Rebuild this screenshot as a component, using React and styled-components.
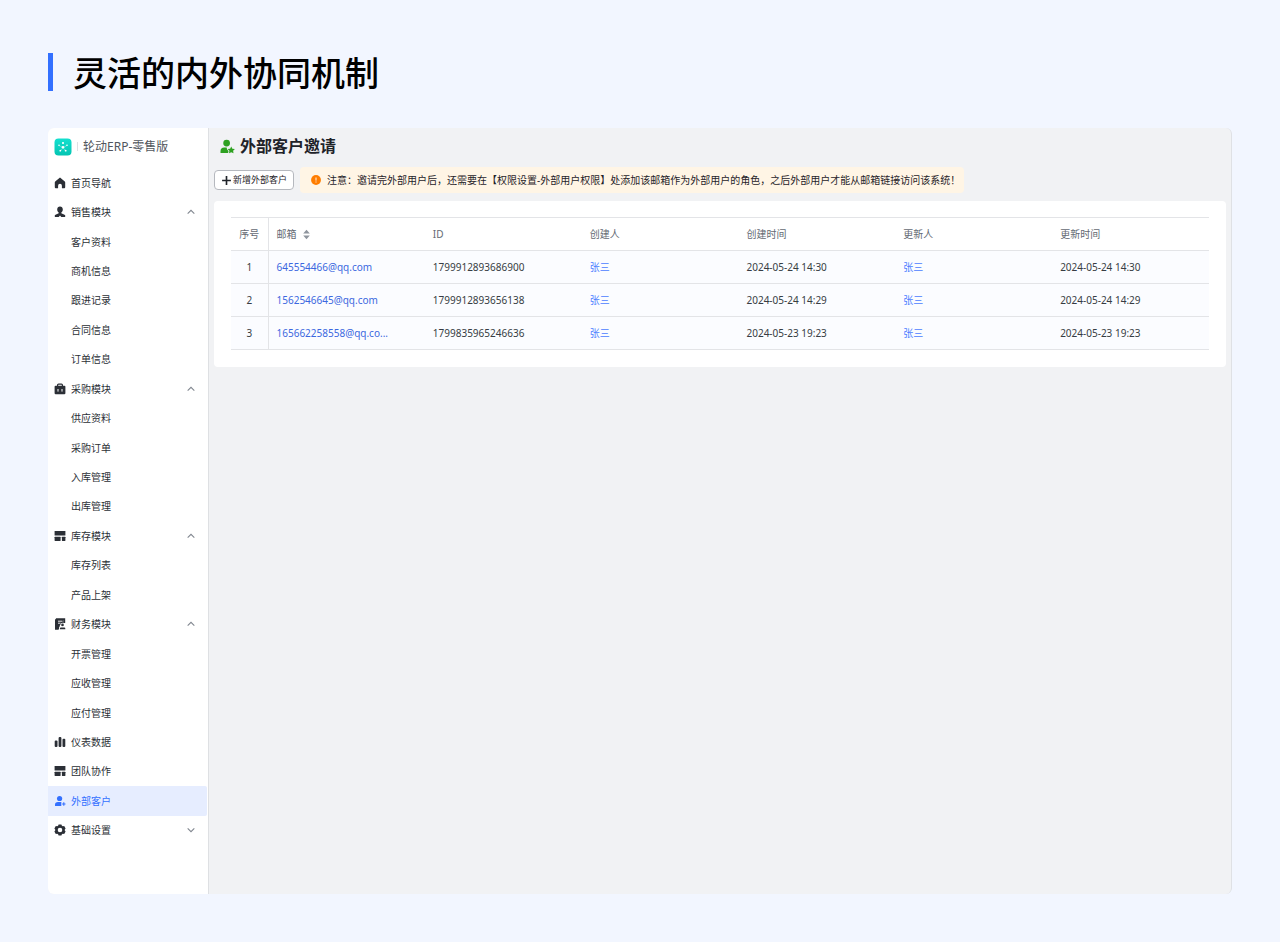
import React from "react";
import styled, { createGlobalStyle } from "styled-components";

const Global = createGlobalStyle`
  *, *::before, *::after { box-sizing: border-box; }
  body {
    margin: 0;
    background: #f2f6ff;
    color: #1f2329;
    font: 10px/16px "Noto Sans", "Noto Sans CJK SC", sans-serif;
  }
`;

const Page = styled.div`
  min-height: 100vh;
  display: flex;
  flex-direction: column;
  gap: 32px;
  padding: 48px;
`;

const Heading = styled.h1`
  display: flex;
  align-items: center;
  gap: 20px;
  margin: 0;
  color: #000;
  font: 500 34px/48px "Noto Sans CJK SC", sans-serif;

  &::before {
    content: "";
    width: 5px;
    height: 38px;
    background: #3370ff;
  }
`;

const Window = styled.div`
  flex: 1;
  display: flex;
  overflow: hidden;
  border-radius: 6px;
  border-right: 1px solid #dfe1e5;
  background: #f1f2f4;
`;

const Sidebar = styled.aside`
  flex: none;
  width: 161px;
  display: flex;
  flex-direction: column;
  background: #fff;
  border-right: 1px solid #dee0e3;
`;

const Brand = styled.div`
  display: flex;
  align-items: center;
  height: 40px;
  padding: 0 6px 3px;
  color: #51565d;
  font-size: 12px;
`;

const Divider = styled.span`
  width: 1px;
  height: 9px;
  margin: 0 5px;
  background: #dee0e3;
`;

const Nav = styled.nav`
  flex: 1;
  display: grid;
  grid-auto-rows: minmax(24px, 1fr);
  padding: 0 1px 49px 0;
`;

const NavItem = styled.a`
  display: flex;
  align-items: center;
  gap: 5px;
  padding: 0 11px 0 ${(p) => (p.$child ? 23 : 6)}px;
  border-radius: 0 2px 2px 0;
  background: ${(p) => (p.$active ? "#e6edff" : "transparent")};
  color: ${(p) => (p.$active ? "#3370ff" : "#2b2f36")};
  text-decoration: none;
`;

const NavLabel = styled.span`
  flex: 1;
`;

const Icon = styled.svg`
  flex: none;
  display: block;
  width: ${(p) => p.$size || 12}px;
  height: ${(p) => p.$size || 12}px;
  color: ${(p) => p.$color || "currentColor"};
`;

const Main = styled.main`
  flex: 1;
  min-width: 0;
  padding: 4px 5px;
`;

const TitleRow = styled.div`
  display: flex;
  align-items: center;
  gap: 5px;
  height: 28px;
  padding-left: 6px;
`;

const Title = styled.h2`
  margin: 0;
  font-size: 16px;
  line-height: 24px;
  font-weight: 700;
`;

const Toolbar = styled.div`
  display: flex;
  align-items: center;
  gap: 6px;
  padding: 7px 0 8px;
`;

const AddButton = styled.button`
  display: flex;
  align-items: center;
  justify-content: center;
  gap: 1px;
  width: 80px;
  height: 20px;
  padding: 0;
  border: 1px solid #b5b8be;
  border-radius: 4px;
  background: #fff;
  color: #1f2329;
  font: inherit;
  font-size: 9px;
  white-space: nowrap;
`;

const Notice = styled.p`
  display: flex;
  align-items: center;
  gap: 6px;
  margin: 0;
  padding: 5px 4px 5px 11px;
  border-radius: 4px;
  background: #fff5e5;
`;

const Card = styled.section`
  padding: 16px 17px 17px;
  border-radius: 4px;
  background: #fff;
`;

const Table = styled.table`
  width: 100%;
  table-layout: fixed;
  border-collapse: collapse;
  border-top: 1px solid #e3e4e7;
`;

const cell = `
  height: 33px;
  padding: 0 8px;
  border-bottom: 1px solid #e3e4e7;
  text-align: left;
  font-weight: 400;
  white-space: nowrap;

  &:first-child {
    width: 37px;
    padding: 0;
    border-right: 1px solid #e3e4e7;
    text-align: center;
  }
`;

const HeadCell = styled.th`
  ${cell}
  color: #646a73;
`;

const Cell = styled.td`
  ${cell}
  color: #373c43;
  background: #fbfcff;
`;

const SortButton = styled.button`
  display: flex;
  align-items: center;
  gap: 4px;
  padding: 0;
  border: 0;
  background: none;
  color: inherit;
  font: inherit;
`;

const TextLink = styled.a`
  color: ${(p) => (p.$person ? "#4c7dff" : "#3c68e0")};
  text-decoration: none;
`;

const shapes = {
  home: <path d="M6 .6 1.200 4.500Q.8 4.900.8 5.400v4.900q0 .9.9.9h2.400V8.700a1.900 1.900 0 0 1 3.800 0v2.500h2.400q.9 0 .9-.9V5.400q0-.5-.4-.9Z" />,
  person: (
    <path d="M6 .6c1.700 0 2.800 1.200 2.800 2.800 0 1.300-.6 2.500-1.500 3.100v.8l3.200 1.500q.8.400.8 1.100 0 1.200-1 1.200H7.300L6 9.600l-1.300 1.500h-3q-1 0-1-1.200 0-.7.8-1.100l3.200-1.500v-.8C3.800 5.900 3.200 4.700 3.200 3.400 3.200 1.800 4.300.6 6 .6Z" />
  ),
  bag: (
    <>
      <path d="M3.600 3V2q0-.9.9-.9h3q.9 0 .9.900V3" fill="none" stroke="currentColor" strokeWidth="1.200" />
      <rect x=".6" y="2.700" width="10.800" height="8.500" rx="1" />
      <path d="M4 6v2.600M8 6v2.600" stroke="#fff" strokeWidth="1" />
    </>
  ),
  layout: (
    <>
      <rect x=".6" y="1" width="10.800" height="4.600" rx=".4" />
      <rect x=".6" y="6.800" width="6" height="4.200" rx=".4" />
      <rect x="7.900" y="6.800" width="3.500" height="4.200" rx=".4" />
    </>
  ),
  finance: (
    <>
      <path
        d="M1.900 1.200h8.400V5M1.900 1.200v9.600h2.800"
        fill="none"
        stroke="currentColor"
        strokeWidth="1.800"
      />
      <path d="M2 1h7.500v5L6 7l-1 4H2Z" />
      <path d="M4 3.200h4.500M4 5.200h2.500" stroke="#fff" strokeWidth=".9" />
      <circle cx="8.500" cy="6.900" r="2.100" fill="#fff" />
      <circle cx="8.500" cy="6.900" r="1.300" />
      <path d="M5.200 11.700V9.900q0-1.200 1-1.200h4.600q1 0 1 1.200v1.800Z" fill="#fff" />
      <path d="M5.900 11.200v-.7q0-1 1-1h3.400q1 0 1 1v.7Z" />
    </>
  ),
  bars: (
    <>
      <rect x=".7" y="4.500" width="2.800" height="6.500" rx="1" />
      <rect x="4.600" y="1" width="2.800" height="10" rx="1" />
      <rect x="8.500" y="2.700" width="2.800" height="8.300" rx="1" />
    </>
  ),
  member: (
    <>
      <circle cx="5.600" cy="3.500" r="2.600" />
      <path d="M1 10.900V9.800Q1 7 4 7h3.300v3.900Z" />
      <path d="M9.800 7.300v3.400M8.100 9h3.400" stroke="currentColor" strokeWidth="1.100" />
    </>
  ),
  gear: (
    <path
      fillRule="evenodd"
      d="M4.600.5h2.800l.5 1.300.9.500 1.400-.2 1.400 2.400-.9 1.200v.6l.9 1.200-1.400 2.400-1.400-.2-.9.500-.5 1.300H4.600l-.5-1.300-.9-.5-1.400.2L.4 7.500l.9-1.200v-.6L.4 4.500l1.400-2.400 1.400.2.900-.5ZM6 3.700a2.300 2.300 0 1 0 0 4.600A2.300 2.300 0 0 0 6 3.700Z"
    />
  ),
  plus: <path d="M6 1.200v9.600M1.200 6h9.600" stroke="currentColor" strokeWidth="1.800" />,
  up: <path d="m2 8 4-4 4 4" fill="none" stroke="#80868f" strokeWidth="1.300" />,
  down: <path d="m2 4 4 4 4-4" fill="none" stroke="#80868f" strokeWidth="1.300" />,
  sort: <path d="M6 .8 9.600 5H2.400ZM6 11.200 2.400 7h7.200Z" />,
  alert: (
    <>
      <circle cx="6" cy="6" r="5.900" />
      <path d="M6 3v3.700M6 7.800V9" stroke="#fff" strokeWidth="1.100" />
    </>
  ),
  customer: (
    <>
      <circle cx="5.300" cy="3.200" r="2.700" />
      <path d="M.4 11.200V9.700q0-2.900 3-2.900h1.900l.4 1.500 1.100 1.200-.3 1.700Z" />
      <path d="m9 5.900.9 1.800 2 .3-1.400 1.400.3 2L9 10.500l-1.800.9.300-2-1.400-1.400 2-.3Z" />
    </>
  ),
};

const Glyph = ({ name, size, color }) => (
  <Icon viewBox="0 0 12 12" fill="currentColor" aria-hidden="true" $size={size} $color={color}>
    {shapes[name]}
  </Icon>
);

const Logo = () => (
  <Icon viewBox="0 0 18 18" $size={18} aria-hidden="true">
    <defs>
      <linearGradient id="logo" x1="0" y1="0" x2="0" y2="1">
        <stop offset="0" stopColor="#14e0cf" />
        <stop offset="1" stopColor="#04c4b2" />
      </linearGradient>
    </defs>
    <rect x=".5" y=".5" width="17" height="17" rx="4" fill="url(#logo)" />
    <g stroke="#fff" strokeWidth=".5" strokeOpacity=".6">
      <path d="M9 9.500 5 7.500M9 9.500l4-2M9 9.500 6.500 13M9 9.500l2.500 3.500" />
    </g>
    <g fill="#fff">
      <circle cx="9" cy="9.300" r="1.300" />
      <circle cx="9" cy="5" r="1.100" />
      <circle cx="5" cy="7.200" r=".8" />
      <circle cx="13" cy="7.200" r=".8" />
      <circle cx="6.300" cy="12.700" r=".9" />
      <circle cx="11.700" cy="12.700" r=".9" />
    </g>
  </Icon>
);

const menu = [
  { label: "首页导航", icon: "home" },
  { label: "销售模块", icon: "person", arrow: "up" },
  { label: "客户资料" },
  { label: "商机信息" },
  { label: "跟进记录" },
  { label: "合同信息" },
  { label: "订单信息" },
  { label: "采购模块", icon: "bag", arrow: "up" },
  { label: "供应资料" },
  { label: "采购订单" },
  { label: "入库管理" },
  { label: "出库管理" },
  { label: "库存模块", icon: "layout", arrow: "up" },
  { label: "库存列表" },
  { label: "产品上架" },
  { label: "财务模块", icon: "finance", arrow: "up" },
  { label: "开票管理" },
  { label: "应收管理" },
  { label: "应付管理" },
  { label: "仪表数据", icon: "bars" },
  { label: "团队协作", icon: "layout" },
  { label: "外部客户", icon: "member", active: true },
  { label: "基础设置", icon: "gear", arrow: "down" },
];

const rows = [
  ["645554466@qq.com", "1799912893686900", "2024-05-24 14:30"],
  ["1562546645@qq.com", "1799912893656138", "2024-05-24 14:29"],
  ["165662258558@qq.co...", "1799835965246636", "2024-05-23 19:23"],
];

export default function App() {
  return (
    <>
      <Global />
      <Page>
        <Heading>灵活的内外协同机制</Heading>
        <Window>
          <Sidebar>
            <Brand>
              <Logo />
              <Divider />
              轮动ERP-零售版
            </Brand>
            <Nav>
              {menu.map(({ label, icon, arrow, active }) => (
                <NavItem
                  key={label}
                  href="#"
                  $child={!icon}
                  $active={active}
                  aria-current={active ? "page" : undefined}
                >
                  {icon && <Glyph name={icon} />}
                  <NavLabel>{label}</NavLabel>
                  {arrow && <Glyph name={arrow} size={10} />}
                </NavItem>
              ))}
            </Nav>
          </Sidebar>
          <Main>
            <TitleRow>
              <Glyph name="customer" size={15} color="#2ea121" />
              <Title>外部客户邀请</Title>
            </TitleRow>
            <Toolbar>
              <AddButton type="button">
                <Glyph name="plus" size={11} />
                新增外部客户
              </AddButton>
              <Notice>
                <Glyph name="alert" size={10} color="#ff7d00" />
                注意：邀请完外部用户后，还需要在【权限设置-外部用户权限】处添加该邮箱作为外部用户的角色，之后外部用户才能从邮箱链接访问该系统！
              </Notice>
            </Toolbar>
            <Card>
              <Table>
                <thead>
                  <tr>
                    <HeadCell>序号</HeadCell>
                    <HeadCell>
                      <SortButton type="button">
                        邮箱
                        <Glyph name="sort" size={11} color="#8f959e" />
                      </SortButton>
                    </HeadCell>
                    <HeadCell>ID</HeadCell>
                    <HeadCell>创建人</HeadCell>
                    <HeadCell>创建时间</HeadCell>
                    <HeadCell>更新人</HeadCell>
                    <HeadCell>更新时间</HeadCell>
                  </tr>
                </thead>
                <tbody>
                  {rows.map(([email, id, time], i) => (
                    <tr key={id}>
                      <Cell>{i + 1}</Cell>
                      <Cell>
                        <TextLink href="#">{email}</TextLink>
                      </Cell>
                      <Cell>{id}</Cell>
                      <Cell>
                        <TextLink href="#" $person>张三</TextLink>
                      </Cell>
                      <Cell>{time}</Cell>
                      <Cell>
                        <TextLink href="#" $person>张三</TextLink>
                      </Cell>
                      <Cell>{time}</Cell>
                    </tr>
                  ))}
                </tbody>
              </Table>
            </Card>
          </Main>
        </Window>
      </Page>
    </>
  );
}
